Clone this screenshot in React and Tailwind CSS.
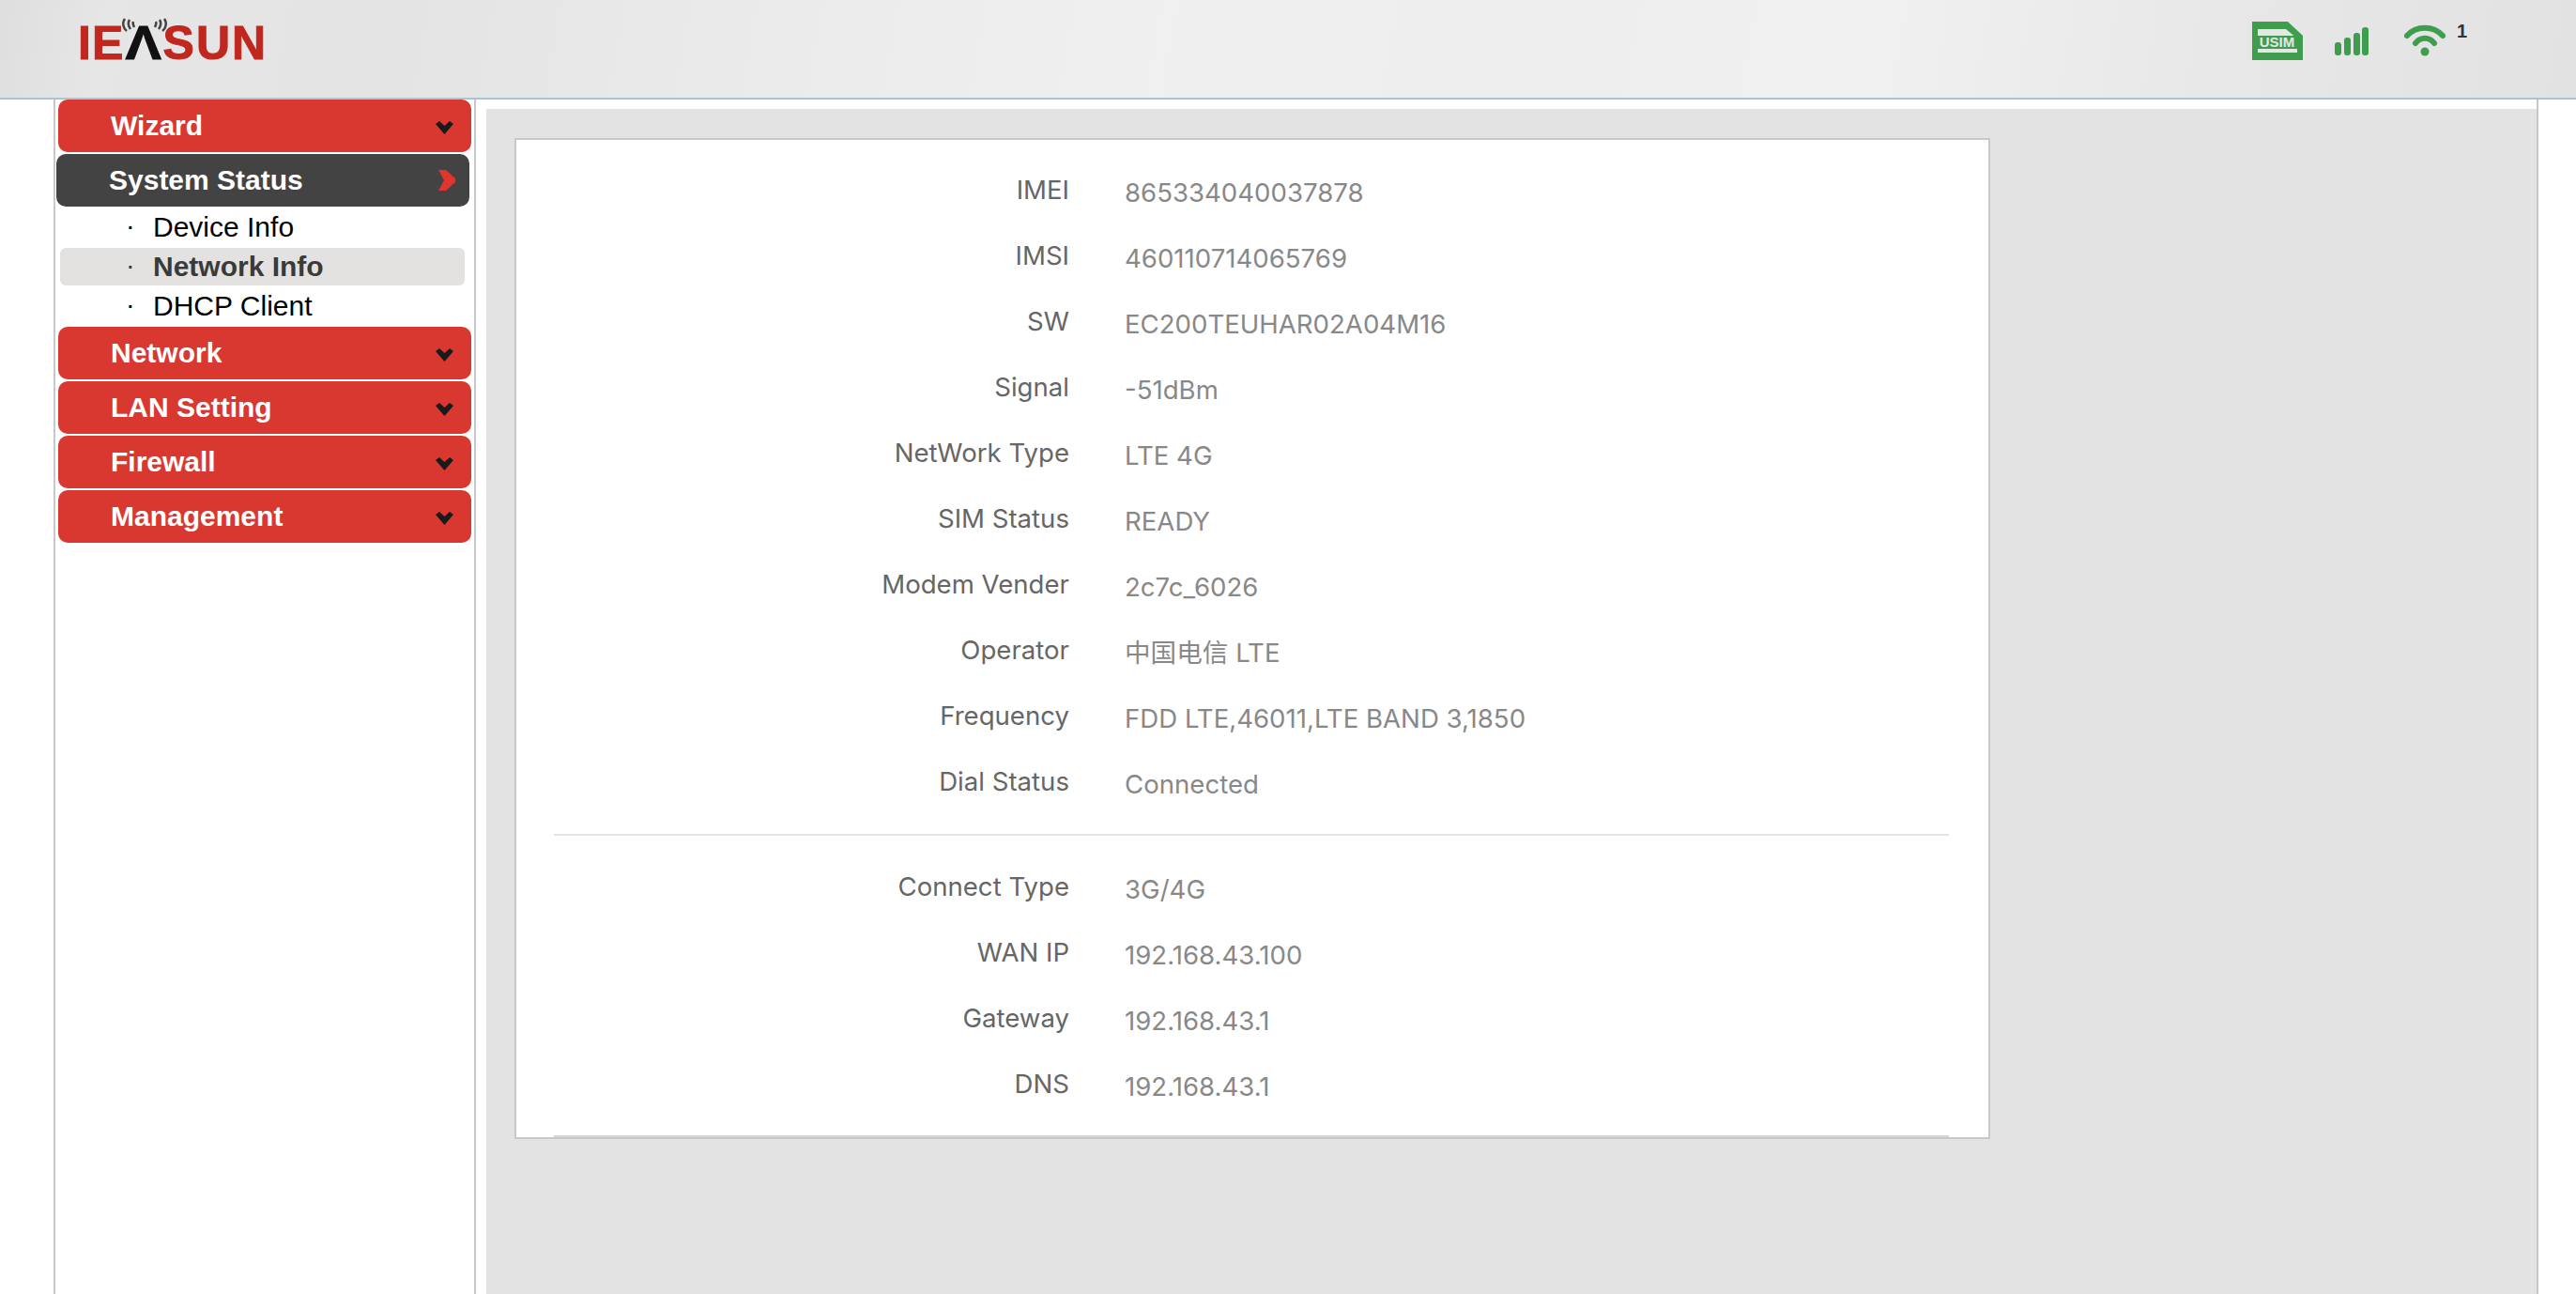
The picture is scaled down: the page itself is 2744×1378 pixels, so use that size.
const menuFont = { fontFamily: '"Liberation Sans", Arial, sans-serif' };

const groupOne = [
  ['IMEI', '865334040037878'],
  ['IMSI', '460110714065769'],
  ['SW', 'EC200TEUHAR02A04M16'],
  ['Signal', '-51dBm'],
  ['NetWork Type', 'LTE 4G'],
  ['SIM Status', 'READY'],
  ['Modem Vender', '2c7c_6026'],
  ['Operator', '中国电信 LTE'],
  ['Frequency', 'FDD LTE,46011,LTE BAND 3,1850'],
  ['Dial Status', 'Connected'],
];

const groupTwo = [
  ['Connect Type', '3G/4G'],
  ['WAN IP', '192.168.43.100'],
  ['Gateway', '192.168.43.1'],
  ['DNS', '192.168.43.1'],
];

const ChevronDown = () => (
  <svg width="19" height="14" viewBox="0 0 19 14" className="mt-[3px]">
    <polygon points="0,3 4,0 9.5,5 15,0 19,3 9.5,14" fill="#1a1a1a" />
  </svg>
);

const ChevronRight = () => (
  <svg width="18" height="22" viewBox="0 0 18 22">
    <polygon points="0,0 8,0 18,9 18,13 8,22 0,22 6,11" fill="#e0352c" />
  </svg>
);

const MenuItem = ({ label }) => (
  <div className="ml-[3px] mb-[2px] flex h-[56px] w-[440px] items-center justify-between rounded-[10px] bg-[#d93831] pl-[56px] pr-[19px]">
    <span className="text-[30px] leading-none font-bold text-white">{label}</span>
    <ChevronDown />
  </div>
);

const SubItem = ({ label, active }) => (
  <div className={`ml-[5px] mb-[2px] flex h-[40px] w-[431px] items-center rounded-[6px] pl-[72px] text-[30px] leading-none ${active ? 'bg-[#e3e2e0] font-bold text-[#3a3a3a]' : 'text-black'}`}>
    <span className="w-[27px] text-[20px] font-bold">·</span>
    {label}
  </div>
);

const Logo = () => (
  <div className="relative ml-[83px] flex h-[35px] items-center text-[50px] leading-none font-bold text-[#c0271e] [-webkit-text-stroke:1px_#c0271e]" style={menuFont}>
    <span className="tracking-[1px]">IE</span>
    <span className="mx-[4px] origin-center scale-x-[1.15] text-[#111] [-webkit-text-stroke:1px_#111]">Λ</span>
    <span className="tracking-[2px]">SUN</span>
    <svg width="50" height="18" viewBox="0 0 50 18" className="absolute left-[46px] top-[-10px]" fill="none" stroke="#444" strokeWidth="2.5">
      <path d="M4 2 C1 6 2 12 6 15" />
      <path d="M9 3 C7 6 8 10 10 13" />
      <path d="M13 5 C12 7 13 9 14 11" />
      <path d="M46 2 C49 6 48 12 44 15" />
      <path d="M41 3 C43 6 42 10 40 13" />
      <path d="M37 5 C38 7 37 9 36 11" />
    </svg>
  </div>
);

const StatusIcons = () => (
  <div className="flex items-start pt-[23px]">
    <svg width="54" height="41" viewBox="0 0 54 41">
      <path d="M0 0 H38 L54 15 V41 H0 Z" fill="#3f9e4d" />
      <path d="M6 8 H36 L48 18 V33 H6 Z" fill="#e6e6e6" />
      <rect x="4" y="15" width="45" height="14" fill="#3f9e4d" />
      <text x="26.5" y="27" textAnchor="middle" fontSize="15" fontWeight="700" fill="#e6e6e6" fontFamily="Liberation Sans, sans-serif">USIM</text>
    </svg>
    <svg width="36" height="30" viewBox="0 0 36 30" className="ml-[34px] mt-[6px]" fill="#3f9e4d">
      <rect x="0" y="16" width="7" height="14" rx="3" />
      <rect x="10" y="11" width="7" height="19" rx="3" />
      <rect x="20" y="6" width="7" height="24" rx="3" />
      <rect x="29" y="0" width="7" height="30" rx="3" />
    </svg>
    <svg width="44" height="34" viewBox="0 0 44 34" className="ml-[38px] mt-[3px]" fill="none" stroke="#3f9e4d" strokeWidth="6" strokeLinecap="round">
      <path d="M3 12 C13 1 31 1 41 12" />
      <path d="M12 20 C17 13 27 13 32 20" />
      <circle cx="22" cy="29" r="4.5" fill="#3f9e4d" stroke="none" />
    </svg>
    <span className="ml-[12px] mt-[-2px] text-[20px] leading-[24px] font-bold text-[#333]" style={menuFont}>1</span>
  </div>
);

const InfoRow = ({ label, value }) => (
  <div className="flex h-[70px] items-center text-[27.6px]">
    <div className="mb-[5px] w-[549px] text-right text-[#666]">{label}</div>
    <div className="ml-[59px] mt-[1px] text-[#888]">{value}</div>
  </div>
);

const App = () => {
  return (
    <div className="flex h-[1378px] flex-col overflow-hidden bg-white">
      <header className="flex h-[106px] shrink-0 items-start justify-between border-b-2 border-[#a9c5d2] bg-[linear-gradient(100deg,#dedede_0%,#e6e6e6_4%,#e4e4e4_15%,#ececec_33%,#f0f0f0_45%,#eeeeee_60%,#f1f1f1_72%,#e8e8e8_85%,#e2e2e2_100%)] pr-[116px]">
        <div className="pt-[28px]"><Logo /></div>
        <StatusIcons />
      </header>

      <div className="flex flex-1 pl-[57px]">
        <aside className="w-[450px] border-x-2 border-[#c8c8c8]" style={menuFont}>
          <MenuItem label="Wizard" />
          <div className="ml-[1px] mb-[2px] flex h-[56px] w-[440px] items-center justify-between rounded-[10px] bg-[#434343] pl-[56px] pr-[15px]">
            <span className="text-[30px] leading-none font-bold text-white">System Status</span>
            <ChevronRight />
          </div>
          <div>
            <SubItem label="Device Info" />
            <SubItem label="Network Info" active />
            <SubItem label="DHCP Client" />
          </div>
          <MenuItem label="Network" />
          <MenuItem label="LAN Setting" />
          <MenuItem label="Firewall" />
          <MenuItem label="Management" />
        </aside>

        <div className="ml-[11px] w-[2186px] border-r-2 border-[#c8c8c8] pt-[10px]">
          <main className="h-full bg-[#e3e3e3] pl-[30px] pt-[31px]" style={{ fontFamily: 'Inter, "Noto Sans CJK SC", sans-serif' }}>
            <section className="h-[1066px] w-[1572px] border-2 border-[#c8c8c8] bg-white pl-[40px] pr-[42px] pt-[21px]">
              {groupOne.map(([label, value]) => (
                <InfoRow key={label} label={label} value={value} />
              ))}
              <div className="mb-[22px] mt-[18px] h-[2px] bg-[#e3e3e3]" />
              {groupTwo.map(([label, value]) => (
                <InfoRow key={label} label={label} value={value} />
              ))}
              <div className="mt-[17px] h-[2px] bg-[#d4d4d4]" />
            </section>
          </main>
        </div>
      </div>
    </div>
  );
};

export default App;
